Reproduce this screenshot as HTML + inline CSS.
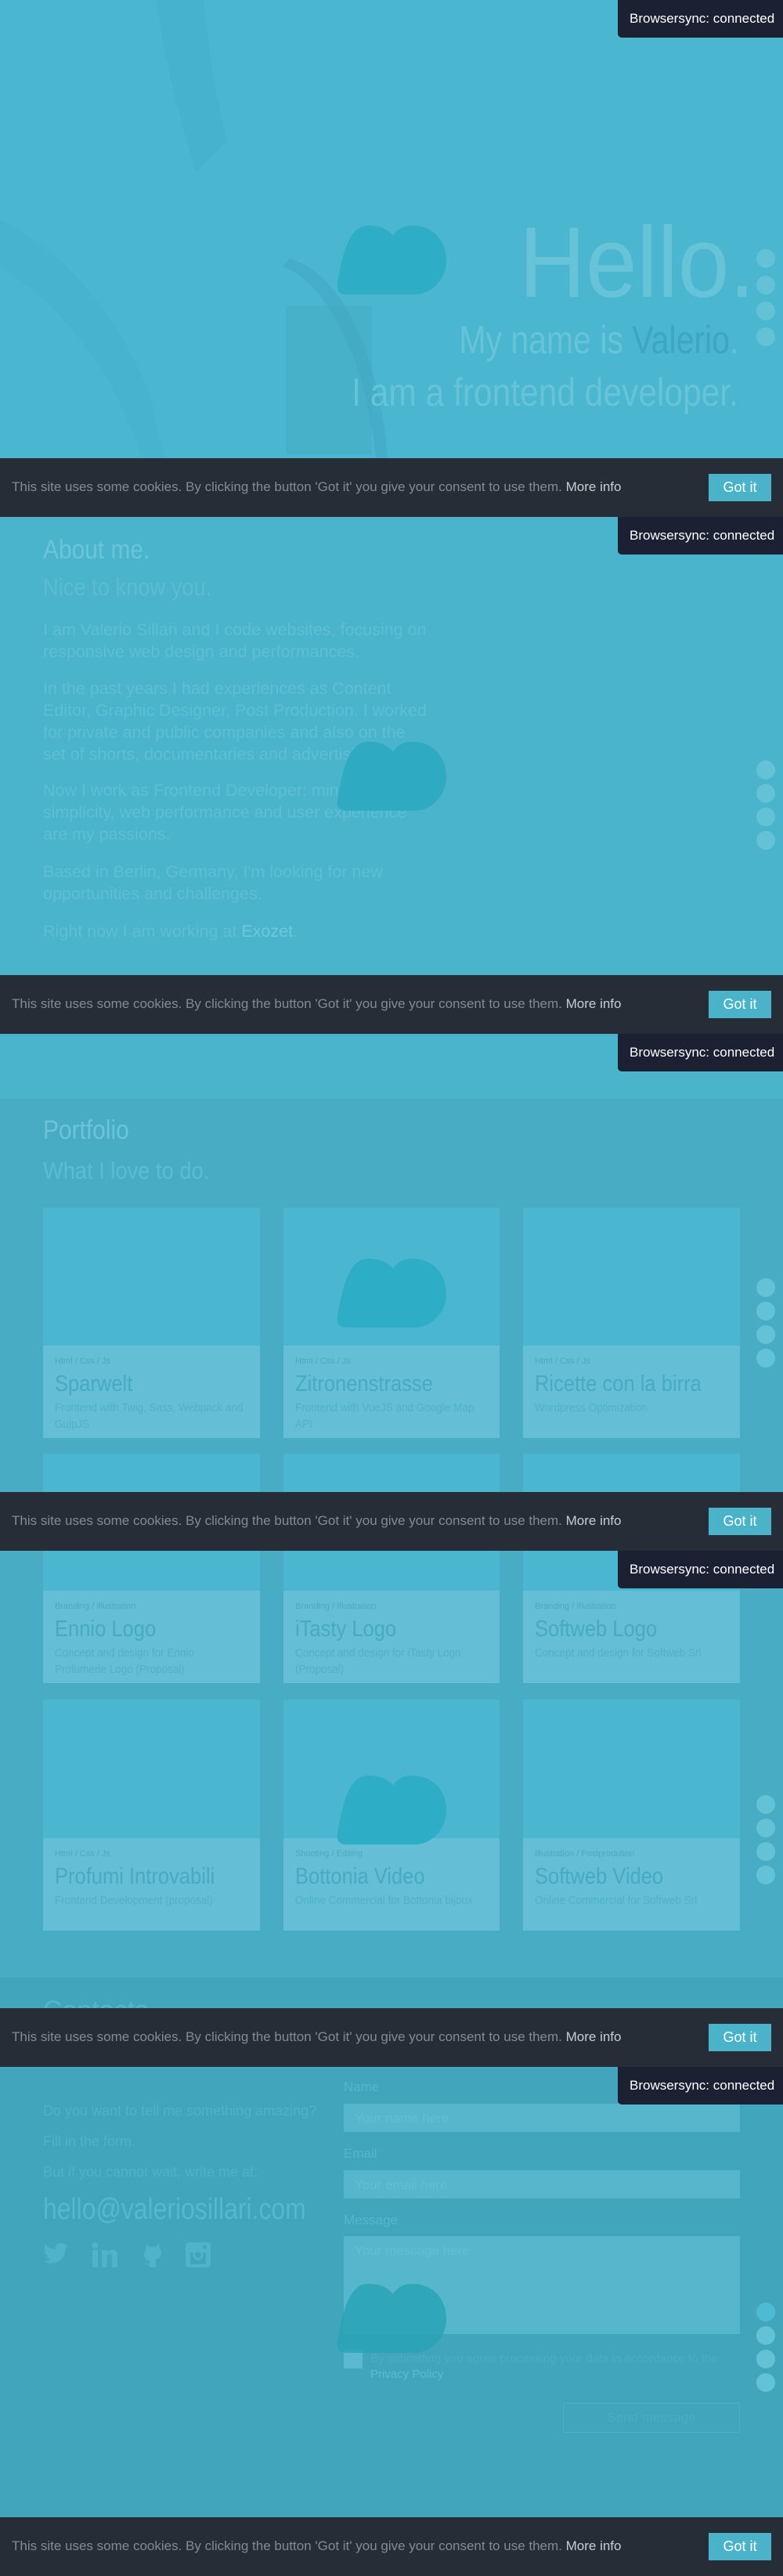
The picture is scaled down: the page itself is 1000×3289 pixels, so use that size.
<!DOCTYPE html>
<html><head><meta charset="utf-8"><style>
*{margin:0;padding:0;box-sizing:border-box}
body{width:1000px;height:3289px;position:relative;overflow:hidden;font-family:"Liberation Sans",sans-serif;background:#49b4cc}
.a{position:absolute;white-space:nowrap}
.c{display:inline-block;transform-origin:left center}
.cookie{position:absolute;left:0;width:1000px;height:75px;background:#272d36}
.cookie .t{position:absolute;left:15px;top:27px;font-size:17px;color:#7f8c95;white-space:nowrap}
.cookie .t b{font-weight:normal;color:#c8cdd0}
.cookie .g{position:absolute;left:905px;top:20px;width:80px;height:35px;background:#4ab3c9;color:#fff;font-size:18px;text-align:center;line-height:35px}
.bs{position:absolute;left:789px;width:211px;height:48px;background:#1c2033;border-bottom-left-radius:5px;color:#fff;font-size:17px;line-height:48px;padding-left:15px;font-family:"Liberation Sans",sans-serif}
.blob{position:absolute;left:430px;width:140px;height:88px}
.dot{position:absolute;left:966px;width:24px;height:24px;border-radius:50%;background:#64c2d7}
.card{position:absolute;width:277px;background:#4ab6cf}
.card .cap{position:absolute;left:0;right:0;bottom:0;height:118px;background:#64bfd6}
.card .tag{position:absolute;left:15px;top:14px;font-size:11px;color:#4aaac2}
.card .ti{position:absolute;left:15px;top:33px;font-size:29px;color:#48a9c2;white-space:nowrap;transform:scaleX(.88);transform-origin:left}
.card .de{position:absolute;left:15px;top:69px;font-size:15px;line-height:21px;color:#4fb1c8;transform:scaleX(.9);transform-origin:left;width:290px}
.h2{font-size:34px;color:#6cc4d8}
.h3{font-size:31px;color:#5dbcd3}
.p{position:absolute;left:55px;font-size:21.5px;line-height:28px;color:#5ebed5;white-space:nowrap}
.lbl{position:absolute;left:439px;font-size:17px;color:#55b7cd}
.inp{position:absolute;left:439px;width:506px;background:#56b6cc;color:#63bdd3;font-size:17px;padding:9px 14px}
</style></head><body>

<!-- HERO -->
<div class="a" style="left:0;top:0;width:1000px;height:585px;background:#4ab6cf"></div>
<svg class="a" style="left:0;top:0" width="600" height="585" viewBox="0 0 600 585">
<path d="M200 0 C210 80 230 150 250 220 L290 180 C270 100 265 40 260 0Z" fill="#44adc7" opacity=".5"/>
<path d="M0 280 C80 320 150 400 190 500 L210 585 L180 585 C150 480 80 390 0 340Z" fill="#45afc8" opacity=".4"/>
<path d="M360 340 C420 360 470 470 480 585 L495 585 C485 460 440 350 370 330Z" fill="#3c9fb7" opacity=".35"/>
<rect x="365" y="390" width="110" height="190" fill="#43a9c1" opacity=".35"/>
</svg>
<div class="a" style="left:663px;top:262px;font-size:128px;color:#66c3d8"><span class="c" style="transform:scaleX(.92)">Hello.</span></div>
<div class="a" style="right:57px;top:405px;font-size:50px;color:#66c3d8;text-align:right"><span class="c" style="transform:scaleX(.82);transform-origin:right center">My name is <span style="color:#3fa6bf">Valerio</span>.</span></div>
<div class="a" style="right:57px;top:472px;font-size:50px;color:#66c3d8;text-align:right"><span class="c" style="transform:scaleX(.85);transform-origin:right center">I am a frontend developer.</span></div>

<!-- ABOUT -->
<div class="a h2" style="left:55px;top:683px"><span class="c" style="transform:scaleX(.88)">About me.</span></div>
<div class="a h3" style="left:55px;top:732px"><span class="c" style="transform:scaleX(.88)">Nice to know you.</span></div>
<div class="p" style="top:790px">I am Valerio Sillari and I code websites, focusing on<br>responsive web design and performances.</div>
<div class="p" style="top:865px">In the past years I had experiences as Content<br>Editor, Graphic Designer, Post Production. I worked<br>for private and public companies and also on the<br>set of shorts, documentaries and advertising.</div>
<div class="p" style="top:995px">Now I work as Frontend Developer: minimalism,<br>simplicity, web performance and user experience<br>are my passions.</div>
<div class="p" style="top:1099px">Based in Berlin, Germany, I'm looking for new<br>opportunities and challenges.</div>
<div class="p" style="top:1175px">Right now I am working at <span style="color:#6ec8dc">Exozet</span>.</div>

<!-- PORTFOLIO -->
<div class="a" style="left:0;top:1403px;width:1000px;height:1122px;background:#47acc4"></div>
<div class="a h2" style="left:55px;top:1424px"><span class="c" style="transform:scaleX(.88)">Portfolio</span></div>
<div class="a h3" style="left:55px;top:1477px"><span class="c" style="transform:scaleX(.88)">What I love to do.</span></div>

<div class="card" style="left:55px;top:1542px;height:294px"><div class="cap"><div class="tag">Html / Css / Js</div><div class="ti">Sparwelt</div><div class="de">Frontend with Twig, Sass, Webpack and<br>GulpJS</div></div></div>
<div class="card" style="left:362px;top:1542px;height:294px;width:276px"><div class="cap"><div class="tag">Html / Css / Js</div><div class="ti">Zitronenstrasse</div><div class="de">Frontend with VueJS and Google Map<br>API</div></div></div>
<div class="card" style="left:668px;top:1542px;height:294px"><div class="cap"><div class="tag">Html / Css / Js</div><div class="ti">Ricette con la birra</div><div class="de">Wordpress Optimization</div></div></div>

<div class="card" style="left:55px;top:1856px;height:293px"><div class="cap"><div class="tag">Branding / Illustration</div><div class="ti">Ennio Logo</div><div class="de">Concept and design for Ennio<br>Profumerie Logo (Proposal)</div></div></div>
<div class="card" style="left:362px;top:1856px;height:293px;width:276px"><div class="cap"><div class="tag">Branding / Illustration</div><div class="ti">iTasty Logo</div><div class="de">Concept and design for iTasty Logo<br>(Proposal)</div></div></div>
<div class="card" style="left:668px;top:1856px;height:293px"><div class="cap"><div class="tag">Branding / Illustration</div><div class="ti">Softweb Logo</div><div class="de">Concept and design for Softweb Srl</div></div></div>

<div class="card" style="left:55px;top:2170px;height:295px"><div class="cap"><div class="tag">Html / Css / Js</div><div class="ti">Profumi Introvabili</div><div class="de">Frontend Development (proposal)</div></div></div>
<div class="card" style="left:362px;top:2170px;height:295px;width:276px"><div class="cap"><div class="tag">Shooting / Editing</div><div class="ti">Bottonia Video</div><div class="de">Online Commercial for Bottonia bijoux</div></div></div>
<div class="card" style="left:668px;top:2170px;height:295px"><div class="cap"><div class="tag">Illustration / Postprodution</div><div class="ti">Softweb Video</div><div class="de">Online Commercial for Softweb Srl</div></div></div>

<!-- CONTACTS -->
<div class="a" style="left:0;top:2525px;width:1000px;height:764px;background:#41a6bb"></div>
<div class="a h2" style="left:55px;top:2548px;color:#55b5cb">Contacts</div>
<div class="p" style="top:2681px;font-size:18px;color:#4fb2c8">Do you want to tell me something amazing?</div>
<div class="p" style="top:2720px;font-size:18px;color:#4fb2c8">Fill in the form.</div>
<div class="p" style="top:2759px;font-size:18px;color:#4fb2c8">But if you cannot wait, write me at:</div>
<div class="a" style="left:55px;top:2800px;font-size:38px;color:#55b8cd"><span class="c" style="transform:scaleX(.84)">hello@valeriosillari.com</span></div>
<svg class="a" style="left:55px;top:2862px" width="220" height="34" viewBox="0 0 220 34" fill="#4fb3c9">
<path d="M32 5c-1.2.5-2.4.8-3.7 1 1.3-.8 2.3-2 2.8-3.5-1.3.7-2.6 1.3-4 1.5C25.9 2.7 24.2 2 22.4 2c-3.6 0-6.5 2.9-6.5 6.5 0 .5 0 1 .2 1.5C10.6 9.7 5.8 7.1 2.7 3.2c-.6 1-.9 2.1-.9 3.3 0 2.3 1.1 4.3 2.9 5.4-1.1 0-2.1-.3-3-.8v.1c0 3.2 2.2 5.8 5.2 6.4-.5.2-1.1.2-1.700.2-.4 0-.8 0-1.2-.1.8 2.6 3.2 4.5 6.1 4.5-2.2 1.7-5 2.8-8.1 2.8-.5 0-1 0-1.6-.1 2.9 1.8 6.3 2.9 10 2.9 12 0 18.5-9.9 18.5-18.5v-.8c1.3-.9 2.4-2.1 3.2-3.4z"/>
<rect x="63" y="11" width="7" height="22"/><circle cx="66.5" cy="5" r="4"/><path d="M75 11h7v3c1-2 3.5-3.5 6.5-3.5 5 0 6.5 3 6.5 8V33h-7V20c0-2.5-.8-4-3-4s-3.5 1.6-3.5 4v13H75z"/>
<path d="M132 2l4 5c1.3-.4 2.6-.6 4-.6s2.700.2 4 .6l4-5c.8 2 .9 4.500.5 6.500 1.500 1.500 2.500 3.500 2.500 6 0 5-3.500 8-8 8.500.8.7 1.200 1.800 1.200 3V33h-8.400v-3.500c-3 .8-4.500-.5-5.500-2-.6-1-1.500-1.600-2.500-1.800 1.500-.5 2.500.5 3.300 1.500.9 1.200 2.400 1.400 4.700.6 0-1 .4-1.900 1.200-2.600-4.500-.5-8-3.500-8-8.500 0-2.500 1-4.500 2.500-6-.4-2-.3-4.500.5-6.500z"/>
<path d="M186 1h24c2.2 0 4 1.8 4 4v24c0 2.2-1.8 4-4 4h-24c-2.2 0-4-1.8-4-4V5c0-2.2 1.8-4 4-4zm2 13v15h20V14h-4c.3.8.5 1.8.5 2.8 0 4-3.4 7.3-6.5 7.3s-6.5-3.3-6.5-7.3c0-1 .2-2 .5-2.8zm10 -1a4 4 0 1 0 .01 0zm6-8v4h5V5z"/>
</svg>

<div class="lbl" style="top:2655px">Name</div>
<div class="inp" style="top:2686px;height:36px">Your name here</div>
<div class="lbl" style="top:2740px">Email</div>
<div class="inp" style="top:2771px;height:36px">Your email here</div>
<div class="lbl" style="top:2825px">Message</div>
<div class="inp" style="top:2855px;height:125px">Your message here</div>
<div class="a" style="left:439px;top:3000px;width:24px;height:24px;background:#5ab9ce"></div>
<div class="a" style="left:473px;top:3003px;font-size:15px;color:#4aaec4">By submitting you agree processing your data in accordance to the</div>
<div class="a" style="left:473px;top:3023px;font-size:15px;color:#5cbbd0">Privacy Policy</div>
<div class="a" style="left:719px;top:3068px;width:226px;height:38px;border:1px solid #4ab0c6;color:#49adc4;font-size:17px;text-align:center;line-height:36px">Send message</div>

<!-- blobs -->
<svg class="blob" style="top:288px" viewBox="0 0 140 88"><path d="M40 0C60 0 68 8 72 13 76 6 84 0 96 0 124 0 140 20 140 45 140 70 120 88 100 88L12 88C2 88 0 82 1 74 8 30 18 0 40 0Z" fill="#2eaec6"/></svg>
<svg class="blob" style="top:947px" viewBox="0 0 140 88"><path d="M40 0C60 0 68 8 72 13 76 6 84 0 96 0 124 0 140 20 140 45 140 70 120 88 100 88L12 88C2 88 0 82 1 74 8 30 18 0 40 0Z" fill="#2eaac3"/></svg>
<svg class="blob" style="top:1607px" viewBox="0 0 140 88"><path d="M40 0C60 0 68 8 72 13 76 6 84 0 96 0 124 0 140 20 140 45 140 70 120 88 100 88L12 88C2 88 0 82 1 74 8 30 18 0 40 0Z" fill="#2eaec6"/></svg>
<svg class="blob" style="top:2267px" viewBox="0 0 140 88"><path d="M40 0C60 0 68 8 72 13 76 6 84 0 96 0 124 0 140 20 140 45 140 70 120 88 100 88L12 88C2 88 0 82 1 74 8 30 18 0 40 0Z" fill="#2eaec6"/></svg>
<svg class="blob" style="top:2916px" viewBox="0 0 140 88"><path d="M40 0C60 0 68 8 72 13 76 6 84 0 96 0 124 0 140 20 140 45 140 70 120 88 100 88L12 88C2 88 0 82 1 74 8 30 18 0 40 0Z" fill="#27a2b6" opacity=".8"/></svg>

<!-- dots -->
<div class="dot" style="top:318px"></div><div class="dot" style="top:352px"></div><div class="dot" style="top:385px"></div><div class="dot" style="top:418px"></div>
<div class="dot" style="top:971px"></div><div class="dot" style="top:1001px"></div><div class="dot" style="top:1031px"></div><div class="dot" style="top:1061px"></div>
<div class="dot" style="top:1632px"></div><div class="dot" style="top:1662px"></div><div class="dot" style="top:1692px"></div><div class="dot" style="top:1722px"></div>
<div class="dot" style="top:2292px"></div><div class="dot" style="top:2322px"></div><div class="dot" style="top:2352px"></div><div class="dot" style="top:2382px"></div>
<div class="dot" style="top:2940px;background:#4dbbd2"></div><div class="dot" style="top:2970px"></div><div class="dot" style="top:3000px"></div><div class="dot" style="top:3030px"></div>

<!-- cookie bars + browsersync -->
<div class="bs" style="top:0">Browsersync: connected</div>
<div class="cookie" style="top:585px"><div class="t">This site uses some cookies. By clicking the button 'Got it' you give your consent to use them. <b>More info</b></div><div class="g">Got it</div></div>
<div class="bs" style="top:660px">Browsersync: connected</div>
<div class="cookie" style="top:1245px"><div class="t">This site uses some cookies. By clicking the button 'Got it' you give your consent to use them. <b>More info</b></div><div class="g">Got it</div></div>
<div class="bs" style="top:1320px">Browsersync: connected</div>
<div class="cookie" style="top:1905px"><div class="t">This site uses some cookies. By clicking the button 'Got it' you give your consent to use them. <b>More info</b></div><div class="g">Got it</div></div>
<div class="bs" style="top:1980px">Browsersync: connected</div>
<div class="cookie" style="top:2564px"><div class="t">This site uses some cookies. By clicking the button 'Got it' you give your consent to use them. <b>More info</b></div><div class="g">Got it</div></div>
<div class="bs" style="top:2639px">Browsersync: connected</div>
<div class="cookie" style="top:3214px"><div class="t">This site uses some cookies. By clicking the button 'Got it' you give your consent to use them. <b>More info</b></div><div class="g">Got it</div></div>
</body></html>
